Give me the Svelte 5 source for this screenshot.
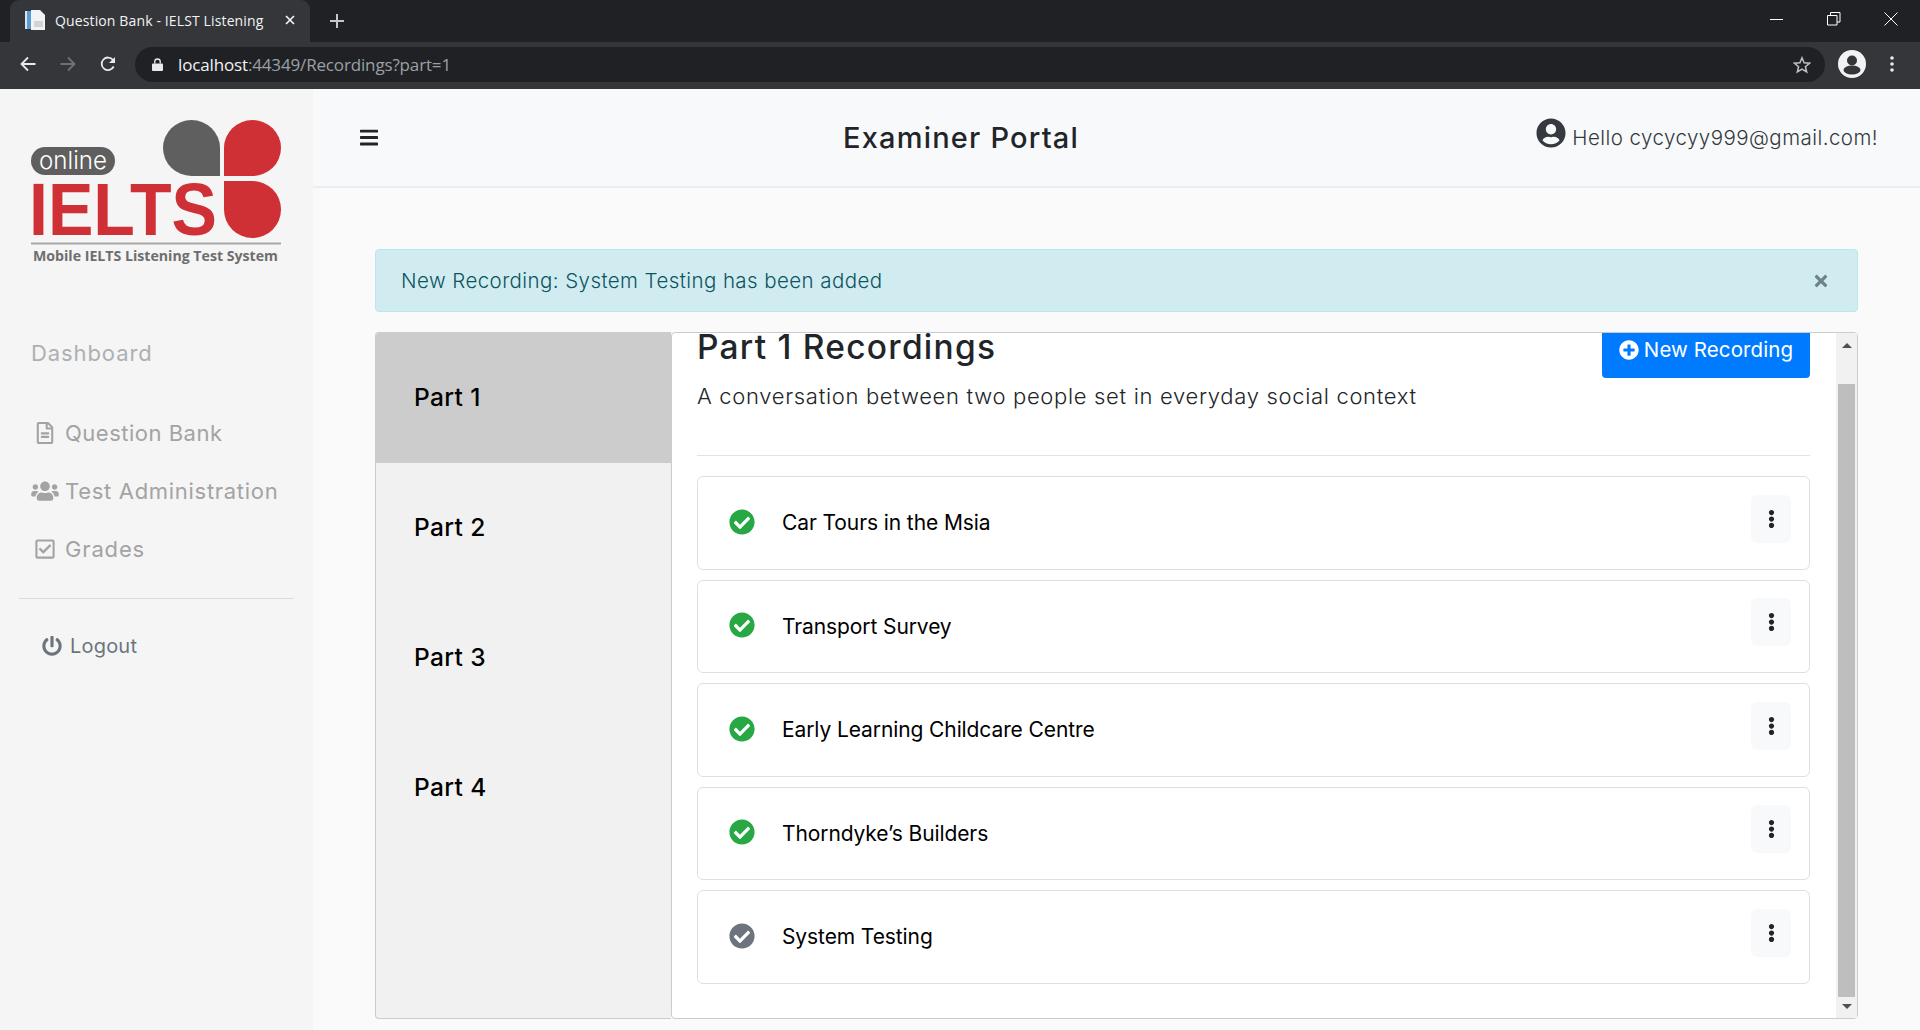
<script>
  const I = {
    check: [512, "M504 256c0 136.967-111.033 248-248 248S8 392.967 8 256 119.033 8 256 8s248 111.033 248 248zM227.314 387.314l184-184c6.248-6.248 6.248-16.379 0-22.627l-22.627-22.627c-6.248-6.249-16.379-6.249-22.628 0L216 308.118l-70.059-70.059c-6.248-6.248-16.379-6.248-22.628 0l-22.627 22.627c-6.248 6.248-6.248 16.379 0 22.627l104 104c6.249 6.249 16.379 6.249 22.628.001z"],
    user: [496, "M248 8C111 8 0 119 0 256s111 248 248 248 248-111 248-248S385 8 248 8zm0 96c48.6 0 88 39.4 88 88s-39.4 88-88 88-88-39.4-88-88 39.4-88 88-88zm0 344c-58.7 0-111.3-26.6-146.5-68.2 18.8-35.4 55.6-59.8 98.5-59.8 2.4 0 4.8.4 7.1 1.1 13 4.2 26.6 6.9 40.9 6.9 14.3 0 28-2.7 40.9-6.9 2.3-.7 4.7-1.1 7.1-1.1 42.9 0 79.7 24.4 98.5 59.8C359.3 421.4 306.7 448 248 448z"],
    plus: [512, "M256 8C119 8 8 119 8 256s111 248 248 248 248-111 248-248S393 8 256 8zm144 276c0 6.6-5.4 12-12 12h-92v92c0 6.6-5.4 12-12 12h-56c-6.6 0-12-5.4-12-12v-92h-92c-6.6 0-12-5.4-12-12v-56c0-6.6 5.4-12 12-12h92v-92c0-6.6 5.4-12 12-12h56c6.6 0 12 5.4 12 12v92h92c6.6 0 12 5.4 12 12v56z"],
    bars: [448, "M16 132h416c8.837 0 16-7.163 16-16V76c0-8.837-7.163-16-16-16H16C7.163 60 0 67.163 0 76v40c0 8.837 7.163 16 16 16zm0 160h416c8.837 0 16-7.163 16-16v-40c0-8.837-7.163-16-16-16H16c-8.837 0-16 7.163-16 16v40c0 8.837 7.163 16 16 16zm0 160h416c8.837 0 16-7.163 16-16v-40c0-8.837-7.163-16-16-16H16c-8.837 0-16 7.163-16 16v40c0 8.837 7.163 16 16 16z"],
    users: [640, "M96 224c35.3 0 64-28.7 64-64s-28.7-64-64-64-64 28.7-64 64 28.7 64 64 64zm448 0c35.3 0 64-28.7 64-64s-28.7-64-64-64-64 28.7-64 64 28.7 64 64 64zm32 32h-64c-17.6 0-33.5 7.1-45.1 18.6 40.3 22.1 68.9 62 75.1 109.4h66c17.7 0 32-14.3 32-32v-32c0-35.3-28.7-64-64-64zm-256 0c61.9 0 112-50.1 112-112S381.9 32 320 32 208 82.1 208 144s50.1 112 112 112zm76.8 32h-8.3c-20.8 10-43.9 16-68.5 16s-47.6-6-68.5-16h-8.3C179.6 288 128 339.6 128 403.2V432c0 26.5 21.5 48 48 48h288c26.5 0 48-21.5 48-48v-28.8c0-63.6-51.6-115.2-115.2-115.2zm-223.7-13.4C161.5 263.1 145.6 256 128 256H64c-35.3 0-64 28.7-64 64v32c0 17.7 14.3 32 32 32h65.9c6.3-47.4 34.9-87.3 75.2-109.4z"],
    power: [512, "M400 54.1c63 45 104 118.6 104 201.9 0 136.8-110.8 247.7-247.5 248C120 504.3 8.2 393 8 256.4 7.9 173.1 48.9 99.3 111.8 54.2c11.7-8.3 28-4.8 35 7.7L162.6 90c5.9 10.5 3.1 23.8-6.6 31-41.5 30.8-68 79.6-68 134.9-.1 92.3 74.5 168.1 168 168.1 91.6 0 168.6-74.2 168-169.1-.3-51.8-24.7-101.8-68.1-134-9.7-7.2-12.4-20.5-6.5-30.9l15.8-28.1c7-12.4 23.2-16.1 34.8-7.8zM296 264V24c0-13.3-10.7-24-24-24h-32c-13.3 0-24 10.7-24 24v240c0 13.3 10.7 24 24 24h32c13.3 0 24-10.7 24-24z"],
    dots: [192, "M96 184c39.8 0 72 32.2 72 72s-32.2 72-72 72-72-32.2-72-72 32.2-72 72-72zM24 80c0 39.8 32.2 72 72 72s72-32.2 72-72S135.8 8 96 8 24 40.2 24 80zm0 352c0 39.8 32.2 72 72 72s72-32.2 72-72-32.2-72-72-72-72 32.2-72 72z"],
    file: [384, "M288 248v28c0 6.6-5.4 12-12 12H108c-6.6 0-12-5.4-12-12v-28c0-6.6 5.4-12 12-12h168c6.6 0 12 5.4 12 12zm-12 72H108c-6.6 0-12 5.4-12 12v28c0 6.6 5.4 12 12 12h168c6.6 0 12-5.4 12-12v-28c0-6.6-5.4-12-12-12zm108-188.1V464c0 26.5-21.5 48-48 48H48c-26.5 0-48-21.5-48-48V48C0 21.5 21.5 0 48 0h204.1C264.8 0 277 5.1 286 14.1L369.9 98c9 8.9 14.1 21.2 14.1 33.9zm-128-80V128h76.1L256 51.9zM336 464V176H232c-13.3 0-24-10.7-24-24V48H48v416h288z"],
    square: [448, "M400 32H48C21.49 32 0 53.49 0 80v352c0 26.51 21.49 48 48 48h352c26.51 0 48-21.49 48-48V80c0-26.51-21.49-48-48-48zm0 400H48V80h352v352zm-35.864-241.724L191.547 361.48c-4.705 4.667-12.303 4.637-16.97-.068l-90.781-91.516c-4.667-4.705-4.637-12.303.069-16.971l22.719-22.536c4.705-4.667 12.303-4.637 16.97.069l59.792 60.277 141.352-140.216c4.705-4.667 12.303-4.637 16.97.068l22.536 22.718c4.667 4.706 4.637 12.304-.068 16.971z"],
    times: [352, "M242.72 256l100.07-100.07c12.28-12.28 12.28-32.19 0-44.48l-22.24-22.24c-12.28-12.28-32.19-12.28-44.48 0L176 189.28 75.93 89.21c-12.28-12.28-32.19-12.28-44.48 0L9.21 111.45c-12.28 12.28-12.28 32.19 0 44.48L109.28 256 9.21 356.07c-12.28 12.28-12.28 32.19 0 44.48l22.24 22.24c12.28 12.28 32.2 12.28 44.48 0L176 322.72l100.07 100.07c12.28 12.28 32.2 12.28 44.48 0l22.24-22.24c12.28-12.28 12.28-32.19 0-44.48L242.72 256z"]
  };
  const parts = ["Part 1", "Part 2", "Part 3", "Part 4"];
  const recordings = [
    { name: "Car Tours in the Msia", done: true },
    { name: "Transport Survey", done: true },
    { name: "Early Learning Childcare Centre", done: true },
    { name: "Thorndyke’s Builders", done: true },
    { name: "System Testing", done: false }
  ];
</script>

{#snippet fa(name, cls)}
  <svg class={cls} viewBox="0 0 {I[name][0]} 512" aria-hidden="true"><path fill="currentColor" d={I[name][1]} /></svg>
{/snippet}

<div class="browser">
  <div class="tabstrip">
    <div class="tab">
      <svg class="favicon" viewBox="0 0 20 20" aria-hidden="true">
        <rect x="0" y="1" width="6" height="18" fill="#d8e4f0" />
        <rect x="2" y="1" width="4" height="18" fill="#5b9bd5" />
        <path d="M6 0h9l5 5v15H6z" fill="#f1f3f4" />
        <rect x="9" y="11" width="9" height="6" fill="#cfd4d8" />
      </svg>
      <span class="tab-title">Question Bank - IELST Listening</span>
      <svg class="tab-x" viewBox="0 0 10 10" aria-hidden="true"><path d="M1 1l8 8M9 1l-8 8" stroke="#f1f3f4" stroke-width="1.7" /></svg>
    </div>
    <svg class="new-tab" viewBox="0 0 14 14" aria-hidden="true"><path d="M7 0v14M0 7h14" stroke="#c4c7c9" stroke-width="2" /></svg>
    <div class="win">
      <svg viewBox="0 0 14 14" aria-hidden="true"><path d="M0 7.5h13" stroke="#fff" fill="none" /></svg>
      <svg viewBox="0 0 14 14" aria-hidden="true"><path d="M.5 3.5h9.5v9.5H.5zM3.5 3.5V.5h9.5v9.5H10" stroke="#fff" fill="none" /></svg>
      <svg viewBox="0 0 14 14" aria-hidden="true"><path d="M.5.5l13 13M13.500.5l-13 13" stroke="#fff" fill="none" /></svg>
    </div>
  </div>
  <div class="toolbar">
    <svg class="nav" viewBox="0 0 16 16" aria-hidden="true"><path d="M15.500 8H2M8 1.500L1.500 8 8 14.500" stroke="#e8eaed" stroke-width="1.800" fill="none" /></svg>
    <svg class="nav fwd" viewBox="0 0 16 16" aria-hidden="true"><path d="M.5 8H14M8 1.500L14.500 8 8 14.500" stroke="#6f7174" stroke-width="1.800" fill="none" /></svg>
    <svg class="nav" viewBox="0 0 16 16" aria-hidden="true"><path d="M13.700 10.500A6.300 6.300 0 1 1 13 4" stroke="#e8eaed" stroke-width="1.800" fill="none" /><path d="M15 1v6H9z" fill="#e8eaed" /></svg>
    <div class="omnibox">
      <svg class="lock" viewBox="0 0 12 14" aria-hidden="true"><path d="M1 6h10a1 1 0 0 1 1 1v6a1 1 0 0 1-1 1H1a1 1 0 0 1-1-1V7a1 1 0 0 1 1-1z" fill="#e8eaed" /><path d="M3 6V4a3 3 0 0 1 6 0v2" stroke="#e8eaed" stroke-width="1.400" fill="none" /></svg>
      <span class="url"><span class="host">localhost</span>:44349/Recordings?part=1</span>
      <svg class="star" viewBox="0 0 18 18" aria-hidden="true"><path d="M9 1.800l2.100 5 5.400.4-4.100 3.500 1.300 5.300L9 13.200 4.300 16l1.300-5.300-4.100-3.500 5.400-.4z" fill="none" stroke="#bdc1c6" stroke-width="1.500" /></svg>
    </div>
    <svg class="avatar" viewBox="0 0 28 28" aria-hidden="true"><circle cx="14" cy="14" r="14" fill="#f1f3f4" /><circle cx="14" cy="10.500" r="5" fill="#35363a" /><ellipse cx="14" cy="20" rx="8.500" ry="4.500" fill="#35363a" /></svg>
    <svg class="kebab" viewBox="0 0 4 16" aria-hidden="true"><circle cx="2" cy="2" r="1.800" fill="#e8eaed" /><circle cx="2" cy="8" r="1.800" fill="#e8eaed" /><circle cx="2" cy="14" r="1.800" fill="#e8eaed" /></svg>
  </div>
</div>

<div class="page">
  <aside class="sidebar">
    <svg class="logo" viewBox="0 0 313 145" aria-label="Online IELTS logo">
      <path d="M220 56h-28.500a28.500 28 0 1 1 28.500-28z" fill="#5e5f5e" />
      <path d="M224 56V28a28.500 28 0 0 1 57 0 28.500 28 0 0 1-28.500 28z" fill="#cf3035" />
      <path d="M224 61h28.500a28.500 28.500 0 0 1 0 57 28.500 28.500 0 0 1-28.500-28.500z" fill="#cf3035" />
      <rect x="31" y="27" width="84" height="28" rx="14" fill="#5e5f5e" />
      <text x="39" y="49" font-family="Inter, sans-serif" font-size="24" font-weight="300" fill="#fff" textLength="68" lengthAdjust="spacingAndGlyphs">online</text>
      <text x="29" y="115" font-family="Liberation Sans, sans-serif" font-size="75" font-weight="700" fill="#cf3035" textLength="188" lengthAdjust="spacingAndGlyphs">IELTS</text>
      <rect x="31" y="122.500" width="250" height="2" fill="#a8a8a8" />
      <text x="33" y="141" font-family="Open Sans, sans-serif" font-size="15" font-weight="700" fill="#6e6e6e" textLength="245" lengthAdjust="spacingAndGlyphs">Mobile IELTS Listening Test System</text>
    </svg>
    <a class="dash">Dashboard</a>
    <nav class="menu">
      <a class="item">{@render fa("file", "mi file")}<span class="t1">Question Bank</span></a>
      <a class="item">{@render fa("users", "mi users")}<span class="t2">Test Administration</span></a>
      <a class="item">{@render fa("square", "mi square")}<span class="t3">Grades</span></a>
    </nav>
    <hr class="side-hr" />
    <a class="logout">{@render fa("power", "pw")}<span>Logout</span></a>
  </aside>

  <main class="main">
    <header class="topbar">
      {@render fa("bars", "burger")}
      <h1 class="portal">Examiner Portal</h1>
      <div class="hello">{@render fa("user", "hello-ic")}<span>Hello cycycyy999@gmail.com!</span></div>
    </header>
    <section class="body">
      <div class="alert">
        <span>New Recording: System Testing has been added</span>
        {@render fa("times", "close")}
      </div>
      <div class="panel">
        <div class="tabs">
          {#each parts as p, i}
            <div class="part" class:active={i === 0}>{p}</div>
          {/each}
        </div>
        <div class="box">
          <div class="scroller">
            <div class="content">
              <div class="head">
                <div>
                  <h2>Part 1 Recordings</h2>
                  <p>A conversation between two people set in everyday social context</p>
                </div>
                <button class="new">{@render fa("plus", "plus")}<span>New Recording</span></button>
              </div>
              <hr class="divider" />
              <div class="rows">
                {#each recordings as r}
                  <div class="row">
                    <span class="status" class:done={r.done}>{@render fa("check", "chk")}</span>
                    <span class="name">{r.name}</span>
                    <button class="more">{@render fa("dots", "dots")}</button>
                  </div>
                {/each}
              </div>
            </div>
          </div>
          <div class="bar">
            <span class="up"></span>
            <span class="thumb"></span>
            <span class="down"></span>
          </div>
        </div>
      </div>
    </section>
  </main>
</div>

<style>
  :global(body) { margin: 0; overflow: hidden; background: #fafafa; font-family: Inter, "Noto Sans", sans-serif; }
  .browser { height: 89px; background: #35363a; font-family: "Open Sans", "Noto Sans", sans-serif; }
  .tabstrip { height: 42px; background: #202124; display: flex; align-items: flex-end; padding-left: 10px; }
  .tab { width: 300px; height: 42px; box-sizing: border-box; background: #35363a; border-radius: 9px 9px 0 0; display: flex; align-items: center; padding: 0 15px 2px 15px; color: #f1f3f4; }
  .favicon { width: 20px; height: 20px; flex: none; }
  .tab-title { margin-left: 10px; font-size: 14px; letter-spacing: .13px; white-space: nowrap; flex: 1; }
  .tab-x { width: 10px; height: 10px; }
  .new-tab { width: 14px; height: 14px; margin: 0 0 14px 20px; }
  .win { margin-left: auto; height: 42px; display: flex; align-items: flex-start; gap: 43px; padding: 12px 22px 0 0; box-sizing: border-box; }
  .win svg { width: 14px; height: 14px; }
  .toolbar { height: 46px; display: flex; align-items: flex-start; }
  .nav { width: 16px; height: 16px; margin: 14px 0 0 20px; flex: none; }
  .nav.fwd { margin-left: 24px; }
  .nav + .nav + .nav { margin-left: 24px; }
  .omnibox { margin: 5px 0 0 19px; width: 1690px; height: 35px; border-radius: 18px; background: #202124; display: flex; align-items: center; flex: none; }
  .lock { width: 11px; height: 13px; margin-left: 17px; }
  .url { margin-left: 15px; font-size: 17px; color: #9aa0a6; letter-spacing: -.15px; }
  .host { color: #f1f3f4; }
  .star { width: 18px; height: 18px; margin-left: auto; margin-right: 14px; }
  .avatar { width: 28px; height: 28px; margin: 8px 0 0 13px; flex: none; }
  .kebab { width: 4px; height: 16px; margin: 14px 0 0 24px; flex: none; }

  .page { display: flex; height: 941px; }
  .sidebar { width: 313px; flex: none; background: #f5f5f5; display: flex; flex-direction: column; padding-top: 31px; box-sizing: border-box; }
  .logo { width: 313px; height: 145px; display: block; margin-bottom: 68px; }
  .dash { height: 40px; line-height: 40px; padding-left: 31px; font-size: 22px; color: #adb0b3; letter-spacing: .9px; }
  .menu { margin-top: 31px; display: flex; flex-direction: column; }
  .item { height: 58px; display: flex; align-items: center; color: #a3a3a3; font-size: 22px; }
  .item span { white-space: nowrap; }
  .mi { width: 28px; height: 22px; margin-left: 31px; margin-right: 6px; flex: none; }
  .t1 { letter-spacing: .5px; }
  .t2 { letter-spacing: .7px; }
  .t3 { letter-spacing: .85px; }
  .side-hr { margin: 20px 19px 0; border: 0; border-top: 1px solid #ddd; width: 275px; }
  .logout { margin-top: 27px; height: 40px; display: flex; align-items: center; padding-left: 42px; color: #6c757d; font-size: 20px; letter-spacing: .2px; }
  .pw { width: 20px; height: 20px; margin-right: 8px; }

  .main { flex: 1; min-width: 0; display: flex; flex-direction: column; }
  .topbar { height: 99px; box-sizing: border-box; background: #f8f9fa; border-bottom: 2px solid #eceded; display: flex; align-items: center; padding: 0 42px 0 47px; }
  .burger { width: 18px; height: 21px; color: #212529; flex: none; }
  .portal { margin: 0 0 0 465px; font-size: 29px; font-weight: 500; color: #212529; white-space: nowrap; letter-spacing: 1.2px; }
  .hello { margin-left: auto; display: flex; align-items: flex-start; color: #343a40; font-size: 20.500px; font-weight: 300; white-space: nowrap; letter-spacing: .45px; }
  .hello-ic { width: 30px; height: 30px; margin-right: 6px; color: #343a40; margin-top: -5px; }
  .hello span { line-height: 30px; }

  .body { padding: 61px 62px 0; }
  .alert { height: 63px; box-sizing: border-box; background: #d1ecf1; border: 1px solid #bee5eb; border-radius: 4px; display: flex; align-items: center; justify-content: space-between; padding: 0 27px 0 25px; color: #0c5460; font-size: 20.500px; font-weight: 300; letter-spacing: .42px; }
  .close { width: 18px; height: 18px; color: #6e8389; }

  .panel { margin-top: 20px; height: 687px; display: flex; }
  .tabs { width: 296px; flex: none; box-sizing: border-box; background: #f1f1f1; border: 1px solid #ccc; border-right: 0; border-radius: 4px 0 0 4px; overflow: hidden; }
  .part { height: 130px; box-sizing: border-box; padding: 0 0 3px 38px; display: flex; align-items: center; color: #000; font-size: 24.500px; font-weight: 500; background: #f1f1f1; letter-spacing: .4px; }
  .part.active { background: #ccc; }
  .box { flex: 1; min-width: 0; display: flex; box-sizing: border-box; background: #fff; border: 1px solid #ccc; border-radius: 4px; }
  .scroller { flex: 1; min-width: 0; overflow: hidden; }
  .content { margin-top: -15px; padding: 0 26px 0 25px; }
  .head { display: flex; justify-content: space-between; align-items: flex-start; height: 98px; }
  h2 { margin: 0; font-size: 33.500px; line-height: 58px; font-weight: 500; color: #212529; white-space: nowrap; letter-spacing: 1.25px; }
  .head p { margin: 0; font-size: 22px; line-height: 40px; font-weight: 300; color: #212529; white-space: nowrap; letter-spacing: .68px; }
  .new { width: 208px; height: 60px; box-sizing: border-box; border: 0; border-radius: 4px; background: #007bff; color: #fff; display: flex; align-items: center; justify-content: center; padding: 3px 0 0; font: 400 20.500px Inter, sans-serif; letter-spacing: .1px; }
  .plus { width: 20px; height: 20px; margin-right: 5px; }
  .divider { margin: 39px 0 20px; border: 0; border-top: 1px solid #e3e3e3; }
  .rows { display: flex; flex-direction: column; gap: 10px; }
  .row { height: 93.500px; box-sizing: border-box; border: 1px solid #dfdfdf; border-radius: 6px; display: flex; align-items: center; padding: 0 18px 0 31px; }
  .status { display: flex; color: #6c757d; margin-top: -2px; }
  .status.done { color: #28a745; }
  .chk { width: 26px; height: 26px; }
  .name { margin-left: 27px; font-size: 21px; color: #000; font-weight: 400; white-space: nowrap; letter-spacing: -.1px; }
  .more { margin-left: auto; margin-top: -8px; width: 40px; height: 48px; border: 0; border-radius: 6px; background: #f8f9fa; color: #212529; display: flex; align-items: center; justify-content: center; padding: 0; }
  .dots { width: 7px; height: 20px; }
  .bar { width: 21px; flex: none; background: #f1f1f1; display: flex; flex-direction: column; align-items: center; box-sizing: border-box; }
  .up { width: 0; height: 0; border: 5px solid transparent; border-top: 0; border-bottom-color: #505050; margin-top: 10px; }
  .thumb { width: 17px; height: 613px; background: #bebebe; margin-top: 36px; }
  .down { width: 0; height: 0; border: 5px solid transparent; border-bottom: 0; border-top-color: #505050; margin-top: 7px; }
</style>
